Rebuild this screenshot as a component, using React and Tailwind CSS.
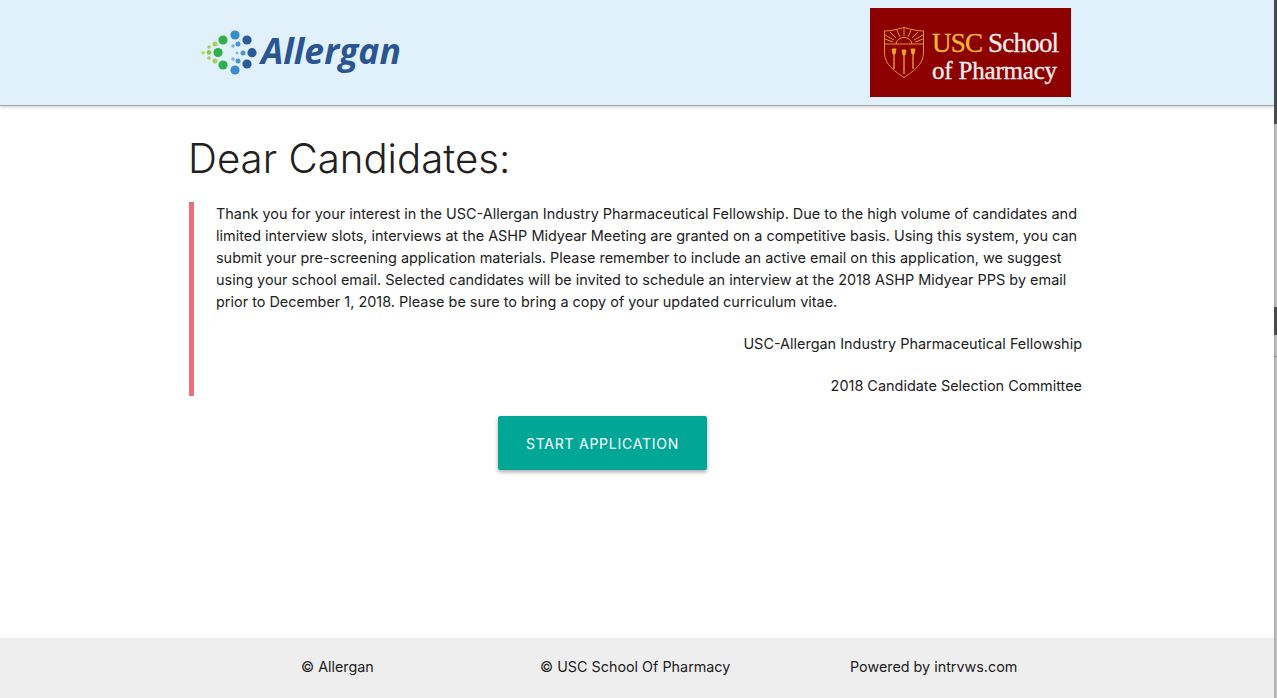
import React from 'react';

// dots of the Allergan mark, measured off the reference
const dots = [
  [235, 35, 4.6, '#3a8cc9'], [247, 40, 4.6, '#2a5b97'], [252, 52.7, 4.6, '#2a5b97'], [247, 64, 4.6, '#2a5b97'], [235, 70, 4.6, '#3a8cc9'],
  [233, 46, 1.8, '#7fb2e0'], [238, 44, 2.5, '#4a94cf'], [237, 53, 1.5, '#7fb2e0'], [243, 53, 2.5, '#4a94cf'], [233, 59, 1.8, '#7fb2e0'], [238, 61, 2.5, '#4a94cf'],
  [223, 40, 4.6, '#2fb04a'], [218, 52.5, 4.6, '#2fb04a'], [223, 65, 4.6, '#2fb04a'],
  [215, 44, 2.5, '#a5d15a'], [215, 61, 2.5, '#a5d15a'], [209, 47, 1.8, '#a5d15a'], [209, 52.5, 2.3, '#8cc63f'], [209, 58, 1.8, '#a5d15a'], [203, 52.7, 1.7, '#c4d92e'],
];

const AllerganLogo = () => (
  <div className="flex items-center h-[60px]">
    <svg width="60" height="60" viewBox="200 23 60 60" className="shrink-0">
      {dots.map(([cx, cy, r, fill], i) => (
        <circle key={i} cx={cx} cy={cy} r={r} fill={fill} />
      ))}
    </svg>
    <span className="font-['Open_Sans',sans-serif] text-[35.5px] font-bold italic text-[#2a5590] leading-none ml-[1px] pb-[5px]">Allergan</span>
  </div>
);

const UscLogo = () => (
  <div className="w-[201px] h-[89px] bg-[#8c0000] flex items-center pl-[14px] gap-[8px] shrink-0">
    <svg width="40" height="51" viewBox="0 0 40 51" fill="none" stroke="#e8a92e" strokeWidth="0.9" className="shrink-0">
      <path d="M0.5 4 C8 4 14 2 20 0.5 C26 2 32 4 39.5 4 V26 C39.5 38 28 45 20 50.5 C12 45 0.5 38 0.5 26 Z" />
      <path d="M1 17 H39 M12 17 A8 6.5 0 0 1 28 17" />
      <path d="M20 1 V9 M13 3 L16 10 M27 3 L24 10 M6 5 L12 11 M34 5 L28 11 M1 8 L10 13 M39 8 L30 13 M1 12 L9 15 M39 12 L31 15" />
      <path d="M10 23 V42 M20 24 V47 M29 23 V42" strokeWidth="1.3" />
      <path d="M8 22 H12 L11 27 H9 Z M18 23 H22 L21 28 H19 Z M27 22 H31 L30 27 H28 Z" fill="#e8a92e" />
    </svg>
    <div className="font-['Liberation_Serif',serif] text-[27px] leading-[28px] whitespace-nowrap text-[#f6eeee] [-webkit-text-stroke:0.3px] tracking-[-0.8px] pt-[9px]">
      <div><span className="text-[#f4bb33]">USC</span> School</div>
      <div className="text-[25px] tracking-[-0.2px]">of Pharmacy</div>
    </div>
  </div>
);

const App = () => {
  return (
    <div className="flex h-[698px] overflow-hidden bg-white font-['Inter',sans-serif] text-[#212121]">
      <div className="flex-1 flex flex-col min-w-0">
        {/* Header */}
        <header className="h-[106px] shrink-0 bg-[#e0f1fc] border-b border-[#a0a6aa] shadow-[0_1px_3px_rgba(0,0,0,0.2)] flex items-start justify-between pl-[200px] pr-[203px] pt-[8px]">
          <div className="pt-[15px]"><AllerganLogo /></div>
          <UscLogo />
        </header>

        {/* Letter */}
        <main className="flex-1 pl-[189px] pr-[192px]">
          <h1 className="text-[40.2px] leading-[48px] font-[350] -ml-[1px] mt-[29px] mb-[19px]">Dear Candidates:</h1>
          <blockquote className="border-l-[5px] border-[#ee6e73] pl-[22px] text-[14.45px] leading-[22px] h-[194px]">
            <p className="pt-[1px]">
              Thank you for your interest in the USC-Allergan Industry Pharmaceutical Fellowship. Due to the high volume of candidates and limited interview slots, interviews at the ASHP Midyear Meeting are granted on a competitive basis. Using this system, you can submit your pre-screening application materials. Please remember to include an active email on this application, we suggest using your school email. Selected candidates will be invited to schedule an interview at the 2018 ASHP Midyear PPS by email prior to December 1, 2018. Please be sure to bring a copy of your updated curriculum vitae.
            </p>
            <p className="text-right mt-[20px]">USC-Allergan Industry Pharmaceutical Fellowship</p>
            <p className="text-right mt-[20px]">2018 Candidate Selection Committee</p>
          </blockquote>
          <button className="block ml-[309px] mt-[20px] w-[209px] h-[54px] rounded-[2px] bg-[#00a797] text-white text-[14px] tracking-[0.75px] shadow-[0_2px_4px_rgba(0,0,0,0.35)]">
            START APPLICATION
          </button>
        </main>

        {/* Footer */}
        <footer className="h-[60px] shrink-0 bg-[#eeeeee] flex items-center text-[14.35px] pl-[301px] pb-[2px]">
          <span className="w-[239px]">© Allergan</span>
          <span className="w-[310px]">© USC School Of Pharmacy</span>
          <span>Powered by intrvws.com</span>
        </footer>
      </div>

      {/* Sliver of the next window's scrollbar at the right edge */}
      <div className="w-[3px] shrink-0 flex flex-col bg-gradient-to-r from-[#a8a8a8] to-[#c8c8c8]">
        <div className="h-[124px] bg-[#4a4a4a]" />
        <div className="h-[183px]" />
        <div className="h-[28px] bg-[#4a4a4a]" />
        <div className="h-[21px]" />
        <div className="h-[1px] bg-[#8a8a8a]" />
      </div>
    </div>
  );
};

export default App;
